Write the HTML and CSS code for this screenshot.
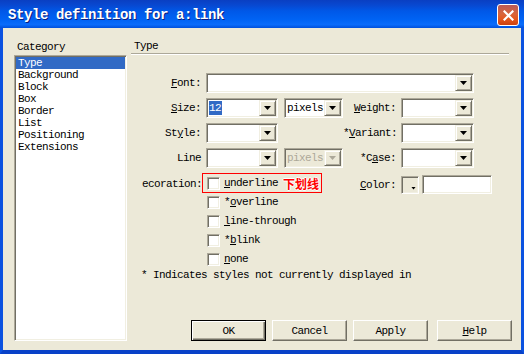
FILE: index.html
```html
<!DOCTYPE html>
<html lang="en">
<head>
    <meta charset="UTF-8">
    <title>Style definition for a:link</title>
    <link rel="stylesheet" href="styles.css">
</head>
<body>
    <div class="window">
        <div class="titlebar">
            <span class="title">Style definition for a:link</span>
            <button class="close-btn">
                <svg width="11" height="11" viewBox="0 0 11 11">
                    <path d="M1.5 1.5 L9.5 9.5 M9.5 1.5 L1.5 9.5" stroke="#fff" stroke-width="2.2" stroke-linecap="square"/>
                </svg>
            </button>
        </div>

        <div class="dialog-body">
            <div class="sidebar">
                <div class="caption">Category</div>
                <ul class="listbox">
                    <li class="selected">Type</li>
                    <li>Background</li>
                    <li>Block</li>
                    <li>Box</li>
                    <li>Border</li>
                    <li>List</li>
                    <li>Positioning</li>
                    <li>Extensions</li>
                </ul>
            </div>

            <div class="panel">
                <div class="panel-head">Type</div>

                <div class="form">
                    <div class="row">
                        <span class="label"><u>F</u>ont:</span>
                        <div class="combo w-font"><span class="value"></span><span class="drop"></span></div>
                    </div>
                    <div class="row">
                        <span class="label"><u>S</u>ize:</span>
                        <div class="combo w-left"><span class="value"><span class="hilite">12</span></span><span class="drop"></span></div>
                        <div class="combo w-unit"><span class="value">pixels</span><span class="drop"></span></div>
                        <span class="label-r"><u>W</u>eight:</span>
                        <div class="combo w-right"><span class="value"></span><span class="drop"></span></div>
                    </div>
                    <div class="row">
                        <span class="label">St<u>y</u>le:</span>
                        <div class="combo w-left"><span class="value"></span><span class="drop"></span></div>
                        <span class="label-r no-unit">*<u>V</u>ariant:</span>
                        <div class="combo w-right"><span class="value"></span><span class="drop"></span></div>
                    </div>
                    <div class="row">
                        <span class="label">Line</span>
                        <div class="combo w-left"><span class="value"></span><span class="drop"></span></div>
                        <div class="combo w-unit disabled"><span class="value">pixels</span><span class="drop"></span></div>
                        <span class="label-r">*C<u>a</u>se:</span>
                        <div class="combo w-right"><span class="value"></span><span class="drop"></span></div>
                    </div>
                </div>

                <div class="decoration">
                    <span class="label deco-label">ecoration:</span>
                    <div class="checks">
                        <div class="check marked"><span class="box"></span><span><u>u</u>nderline</span><span class="note-cn">下划线</span></div>
                        <div class="check"><span class="box"></span><span>*<u>o</u>verline</span></div>
                        <div class="check"><span class="box"></span><span><u>l</u>ine-through</span></div>
                        <div class="check"><span class="box"></span><span>*<u>b</u>link</span></div>
                        <div class="check"><span class="box"></span><span><u>n</u>one</span></div>
                    </div>
                    <div class="color-pick">
                        <span class="label-r"><u>C</u>olor:</span>
                        <span class="swatch"></span>
                        <span class="textbox"></span>
                    </div>
                </div>

                <p class="footnote">* Indicates styles not currently displayed in</p>

                <div class="buttons">
                    <button class="btn default">OK</button>
                    <button class="btn">Cancel</button>
                    <button class="btn">Apply</button>
                    <button class="btn help"><u>H</u>elp</button>
                </div>
            </div>
        </div>
    </div>
</body>
</html>
```

FILE: styles.css
```css
body {
    margin: 0;
    font-family: "Liberation Mono", "DejaVu Sans Mono", monospace;
    font-size: 11px;
    letter-spacing: -0.6px;
    color: #000;
}

.window {
    width: 524px;
    height: 354px;
    display: flex;
    flex-direction: column;
    background: #0054e3;
}

/* title bar */
.titlebar {
    height: 28px;
    flex-shrink: 0;
    display: flex;
    align-items: flex-start;
    padding: 0 5px 0 8px;
    box-sizing: border-box;
    background: linear-gradient(to bottom, #0a3fc2 0, #0848d0 18%, #0058e8 40%, #0063f4 70%, #0a6cfb 88%, #0050dc 100%);
}

.title {
    margin-top: 7px;
    margin-right: auto;
    color: #fff;
    font-weight: bold;
    font-size: 14px;
    line-height: 16px;
    letter-spacing: -0.4px;
    text-shadow: 1px 1px #0a1e80;
}

.close-btn {
    margin-top: 4px;
    width: 22px;
    height: 22px;
    padding: 0;
    border: 1px solid #fff;
    border-radius: 3px;
    background: linear-gradient(to bottom, #b85a58 0, #d8653c 45%, #e4571e 70%, #cc4210 100%);
    display: flex;
    align-items: center;
    justify-content: center;
}

/* dialog body */
.dialog-body {
    flex: 1;
    display: flex;
    gap: 4px;
    background: #ece9d8;
    border-left: 3px solid #0b52e0;
    border-right: 3px solid #0b52e0;
    border-bottom: 4px solid #0841c8;
    padding: 12px 9px 9px 11px;
}

.sidebar {
    width: 113px;
    flex-shrink: 0;
    display: flex;
    flex-direction: column;
}

.caption {
    line-height: 14px;
    padding-left: 3px;
    margin-bottom: 1px;
}

.listbox {
    flex: 1;
    margin: 0;
    list-style: none;
    background: #fff;
    border: 1px solid;
    border-color: #aca899 #fff #fff #aca899;
    box-shadow: inset 1px 1px #716f64, inset -1px -1px #f1efe2;
    padding: 1px;
}

.listbox li {
    height: 12px;
    line-height: 12px;
    padding-left: 2px;
}

.listbox li.selected {
    background: #316ac5;
    color: #fff;
}

.panel {
    flex: 1;
    display: flex;
    flex-direction: column;
}

.panel-head {
    line-height: 13px;
    padding-left: 3px;
    margin-right: 3px;
    border-bottom: 1px solid #aca899;
    box-shadow: 0 1px #fff;
}

/* form rows */
.form {
    margin-top: 19px;
}

.row {
    display: flex;
    align-items: center;
    height: 20px;
    margin-bottom: 5px;
}

.label {
    width: 70px;
    margin-right: 5px;
    flex-shrink: 0;
    text-align: right;
    white-space: nowrap;
}

.label-r {
    width: 53px;
    margin-right: 5px;
    flex-shrink: 0;
    text-align: right;
    white-space: nowrap;
}

.label-r.no-unit {
    margin-left: 65px;
}

.combo {
    height: 20px;
    box-sizing: border-box;
    display: flex;
    background: #fff;
    border: 1px solid;
    border-color: #aca899 #fff #fff #aca899;
    box-shadow: inset 1px 1px #716f64, inset -1px -1px #f1efe2;
    padding: 1px;
    flex-shrink: 0;
}

.w-font { width: 268px; }
.w-left { width: 72px; }
.w-unit { width: 59px; margin-left: 6px; }
.w-right { width: 73px; }

.combo .value {
    flex: 1;
    line-height: 16px;
    padding-left: 1px;
    overflow: hidden;
    white-space: nowrap;
}

.hilite {
    display: inline-block;
    line-height: 14px;
    margin-top: 1px;
    padding-right: 1px;
    background: #316ac5;
    color: #fff;
    vertical-align: top;
}

.drop {
    width: 17px;
    box-sizing: border-box;
    background: #ece9d8;
    border: 1px solid;
    border-color: #f1efe2 #716f64 #716f64 #f1efe2;
    box-shadow: inset 1px 1px #fff, inset -1px -1px #aca899;
    display: flex;
    align-items: center;
    justify-content: center;
}

.drop::after {
    content: "";
    width: 7px;
    height: 4px;
    background: #000;
    clip-path: polygon(0 0, 100% 0, 50% 100%);
}

.combo.disabled {
    background: #ece9d8;
}

.combo.disabled .value {
    color: #aca899;
}

.combo.disabled .drop::after {
    background: #aca899;
}

/* text decoration */
.decoration {
    display: flex;
    align-items: flex-start;
}

.deco-label {
    width: 71px;
    margin-right: 0;
    line-height: 14px;
    padding-top: 4px;
}

.checks {
    width: 120px;
    display: flex;
    flex-direction: column;
}

.check {
    height: 19px;
    box-sizing: border-box;
    padding: 3px 0 0 5px;
    display: flex;
    align-items: flex-start;
    align-self: flex-start;
    white-space: nowrap;
    line-height: 13px;
}

.check.marked {
    height: 20px;
    width: 120px;
    padding-left: 4px;
    border: 1px solid #f00;
}

.box {
    width: 13px;
    height: 13px;
    box-sizing: border-box;
    margin-right: 4px;
    flex-shrink: 0;
    background: #fff;
    border: 1px solid;
    border-color: #aca899 #fff #fff #aca899;
    box-shadow: inset 1px 1px #716f64, inset -1px -1px #f1efe2;
}

.note-cn {
    margin-left: 5px;
    font-family: "Noto Sans CJK SC", sans-serif;
    font-weight: bold;
    font-size: 12px;
    line-height: 13px;
    letter-spacing: 0;
    color: #f00;
    text-shadow: 1px 0 #fff, -1px 0 #fff, 0 1px #fff, 0 -1px #fff;
}

.color-pick {
    margin-left: 21px;
    margin-top: 2px;
    display: flex;
    align-items: center;
    height: 19px;
}

.swatch {
    position: relative;
    width: 18px;
    height: 18px;
    box-sizing: border-box;
    margin-right: 3px;
    background: #ece9d8;
    border: 1px solid;
    border-color: #aca899 #fff #fff #aca899;
    box-shadow: inset 1px 1px #716f64, inset -1px -1px #f1efe2;
}

.swatch::after {
    content: "";
    position: absolute;
    right: 2px;
    bottom: 3px;
    width: 5px;
    height: 3px;
    background: #000;
    clip-path: polygon(0 0, 100% 0, 50% 100%);
}

.textbox {
    width: 70px;
    height: 19px;
    box-sizing: border-box;
    background: #fff;
    border: 1px solid;
    border-color: #aca899 #fff #fff #aca899;
    box-shadow: inset 1px 1px #716f64, inset -1px -1px #f1efe2;
}

.footnote {
    margin: 0;
    padding-left: 10px;
    line-height: 12px;
    white-space: nowrap;
}

/* buttons */
.buttons {
    margin-top: auto;
    display: flex;
    gap: 6px;
    padding-left: 60px;
}

.btn {
    width: 75px;
    height: 21px;
    padding: 0;
    font: inherit;
    letter-spacing: inherit;
    color: #000;
    background: #ece9d8;
    border: 1px solid;
    border-color: #fff #716f64 #716f64 #fff;
    box-shadow: inset -1px -1px #aca899;
}

.btn.default {
    border-color: #000;
    box-shadow: inset 1px 1px #fff, inset -1px -1px #716f64, inset -2px -2px #aca899;
}

.btn.help {
    margin-left: 3px;
}
```
